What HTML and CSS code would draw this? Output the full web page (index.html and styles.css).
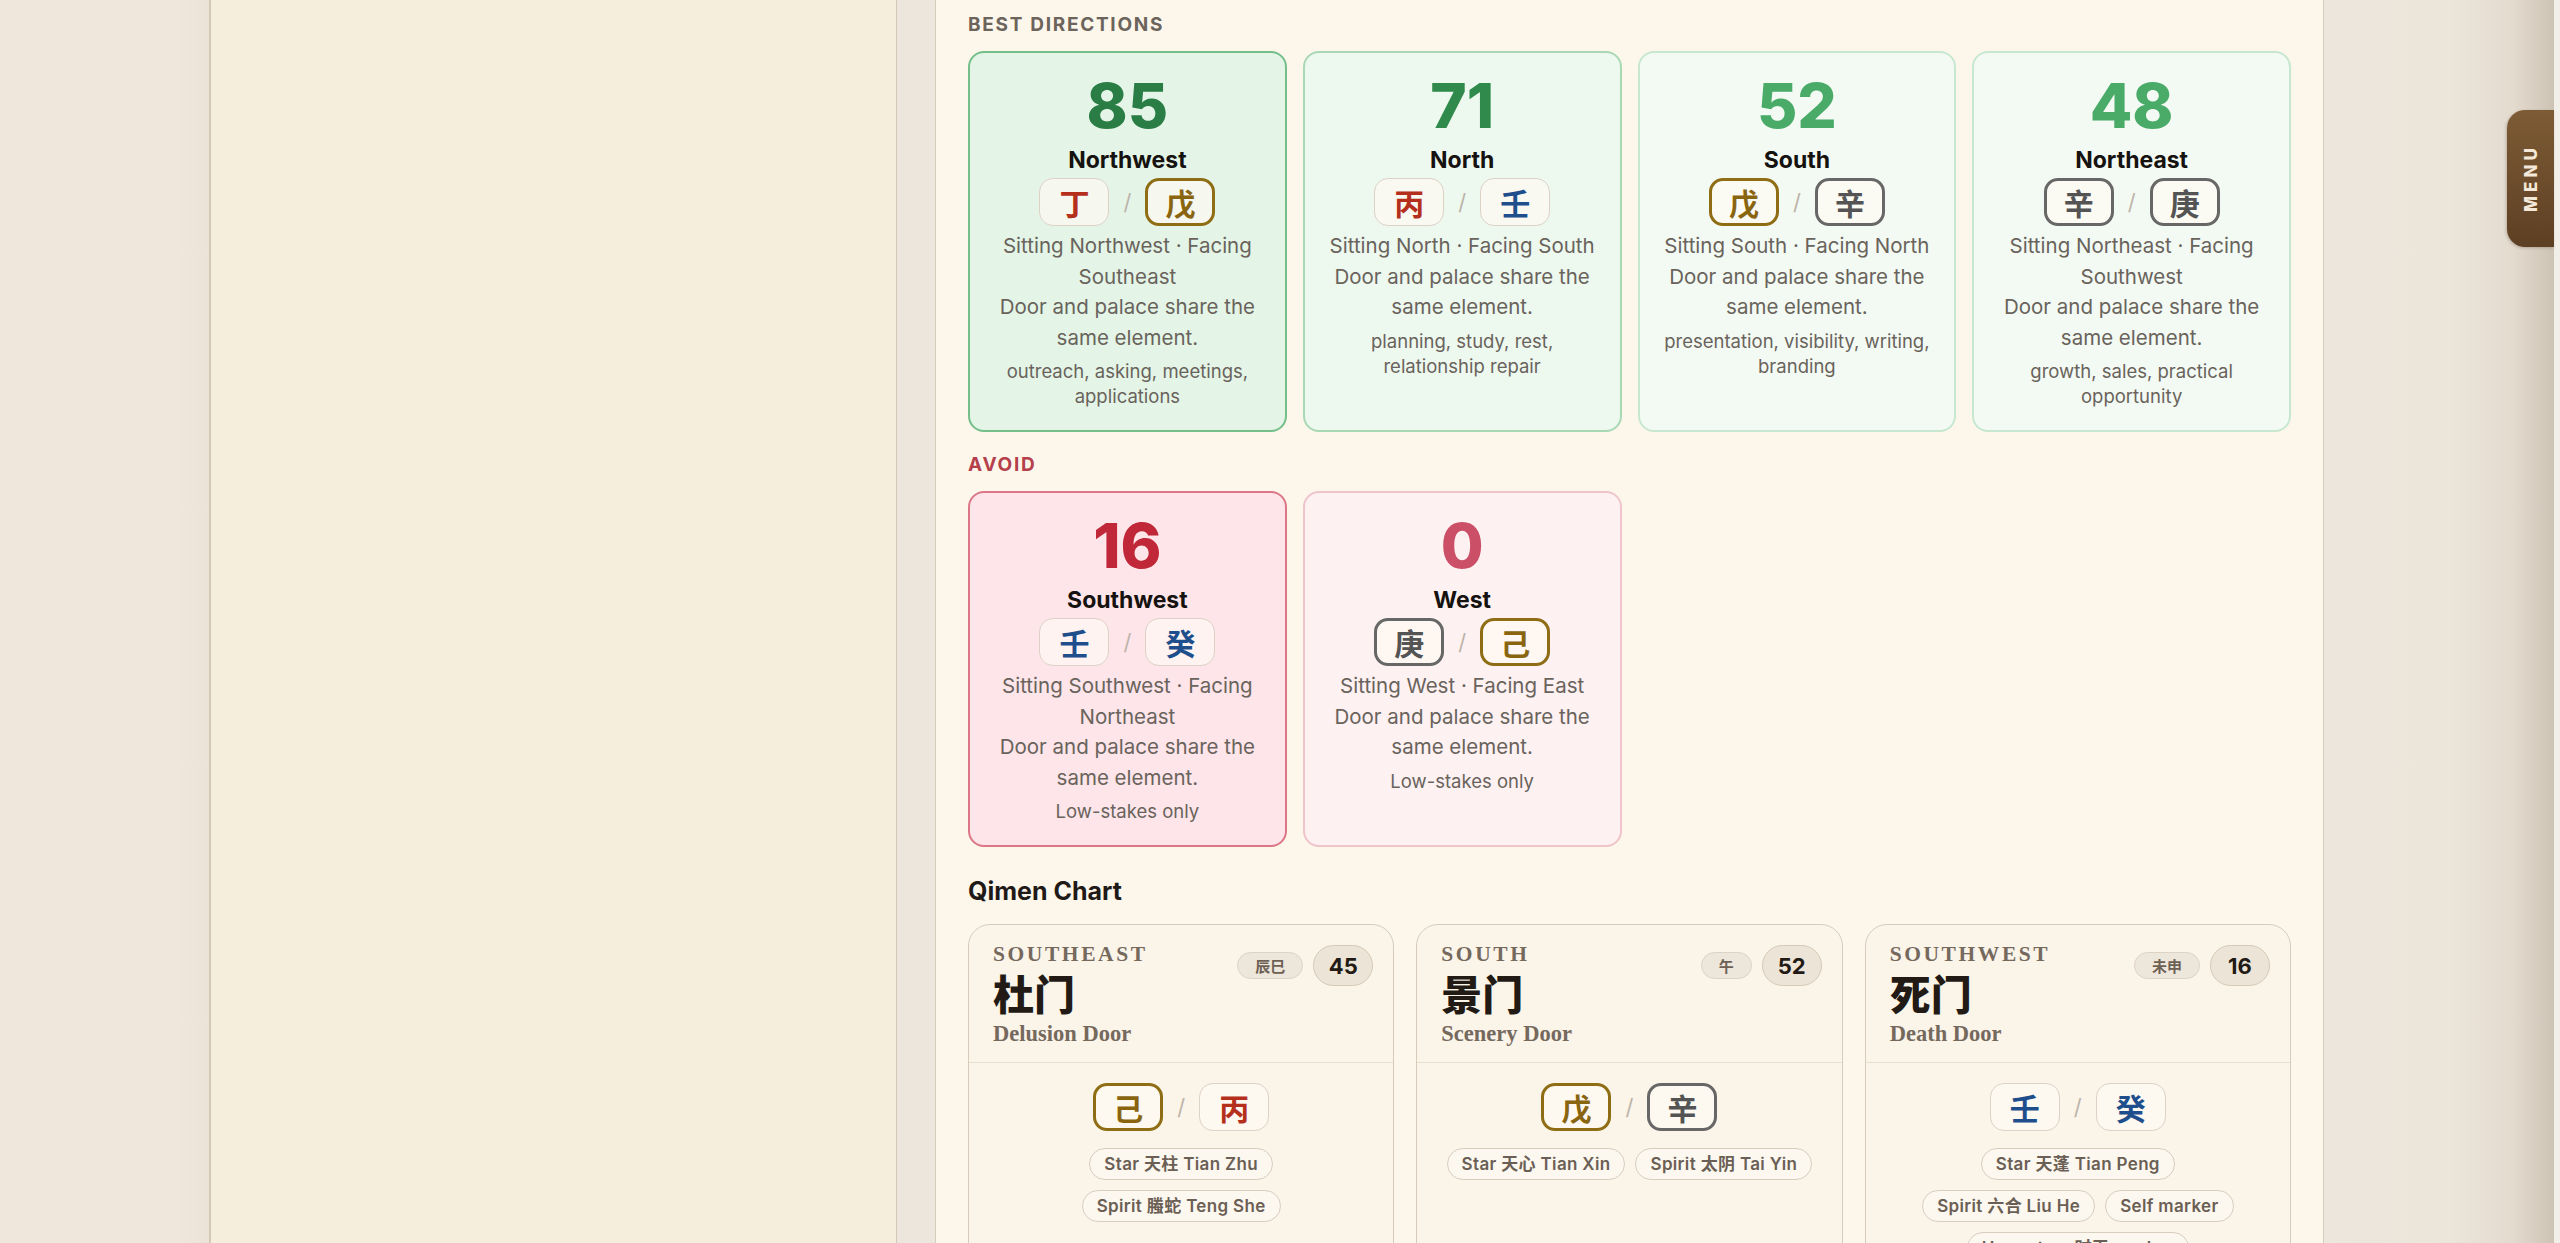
FILE: index.html
```html
<!DOCTYPE html>
<html lang="en">
<head>
    <meta charset="UTF-8">
    <meta name="viewport" content="width=device-width, initial-scale=1.0">
    <title>Qimen Directions</title>

    <link rel="stylesheet" href="styles.css">

</head>
<body>

    <div class="shell">
        <div class="gutter"></div>
        <aside class="side"></aside>
        <div class="gap"></div>

        <main class="main">
            <h4 class="label">Best Directions</h4>
            <div class="dir-grid">
                <div class="dir best-1">
                    <div class="score">85</div>
                    <div class="dir-name">Northwest</div>
                    <div class="stems"><span class="stem fire">丁</span><span class="slash">/</span><span class="stem earth">戊</span></div>
                    <p class="dir-text">Sitting Northwest · Facing Southeast</p>
                    <p class="dir-text">Door and palace share the same element.</p>
                    <p class="dir-use">outreach, asking, meetings, applications</p>
                </div>
                <div class="dir best-2">
                    <div class="score">71</div>
                    <div class="dir-name">North</div>
                    <div class="stems"><span class="stem fire">丙</span><span class="slash">/</span><span class="stem water">壬</span></div>
                    <p class="dir-text">Sitting North · Facing South</p>
                    <p class="dir-text">Door and palace share the same element.</p>
                    <p class="dir-use">planning, study, rest, relationship repair</p>
                </div>
                <div class="dir best-3">
                    <div class="score">52</div>
                    <div class="dir-name">South</div>
                    <div class="stems"><span class="stem earth">戊</span><span class="slash">/</span><span class="stem metal">辛</span></div>
                    <p class="dir-text">Sitting South · Facing North</p>
                    <p class="dir-text">Door and palace share the same element.</p>
                    <p class="dir-use">presentation, visibility, writing, branding</p>
                </div>
                <div class="dir best-3">
                    <div class="score">48</div>
                    <div class="dir-name">Northeast</div>
                    <div class="stems"><span class="stem metal">辛</span><span class="slash">/</span><span class="stem metal">庚</span></div>
                    <p class="dir-text">Sitting Northeast · Facing Southwest</p>
                    <p class="dir-text">Door and palace share the same element.</p>
                    <p class="dir-use">growth, sales, practical opportunity</p>
                </div>
            </div>

            <h4 class="label avoid">Avoid</h4>
            <div class="dir-grid">
                <div class="dir avoid-1">
                    <div class="score">16</div>
                    <div class="dir-name">Southwest</div>
                    <div class="stems"><span class="stem water">壬</span><span class="slash">/</span><span class="stem water">癸</span></div>
                    <p class="dir-text">Sitting Southwest · Facing Northeast</p>
                    <p class="dir-text">Door and palace share the same element.</p>
                    <p class="dir-use">Low-stakes only</p>
                </div>
                <div class="dir avoid-2">
                    <div class="score">0</div>
                    <div class="dir-name">West</div>
                    <div class="stems"><span class="stem metal">庚</span><span class="slash">/</span><span class="stem earth">己</span></div>
                    <p class="dir-text">Sitting West · Facing East</p>
                    <p class="dir-text">Door and palace share the same element.</p>
                    <p class="dir-use">Low-stakes only</p>
                </div>
            </div>

            <h3 class="chart-title">Qimen Chart</h3>
            <div class="chart-grid">
                <div class="palace">
                    <div class="palace-head">
                        <div>
                            <div class="palace-dir">Southeast</div>
                            <div class="palace-door">杜门</div>
                            <div class="palace-en">Delusion Door</div>
                        </div>
                        <div class="badges">
                            <span class="branch">辰巳</span>
                            <span class="pscore">45</span>
                        </div>
                    </div>
                    <div class="palace-body">
                        <div class="stems"><span class="stem earth">己</span><span class="slash">/</span><span class="stem fire">丙</span></div>
                        <div class="tags">
                            <span class="tag">Star 天柱 Tian Zhu</span>
                            <span class="tag">Spirit 螣蛇 Teng She</span>
                        </div>
                    </div>
                </div>
                <div class="palace">
                    <div class="palace-head">
                        <div>
                            <div class="palace-dir">South</div>
                            <div class="palace-door">景门</div>
                            <div class="palace-en">Scenery Door</div>
                        </div>
                        <div class="badges">
                            <span class="branch">午</span>
                            <span class="pscore">52</span>
                        </div>
                    </div>
                    <div class="palace-body">
                        <div class="stems"><span class="stem earth">戊</span><span class="slash">/</span><span class="stem metal">辛</span></div>
                        <div class="tags">
                            <span class="tag">Star 天心 Tian Xin</span>
                            <span class="tag">Spirit 太阴 Tai Yin</span>
                        </div>
                    </div>
                </div>
                <div class="palace">
                    <div class="palace-head">
                        <div>
                            <div class="palace-dir">Southwest</div>
                            <div class="palace-door">死门</div>
                            <div class="palace-en">Death Door</div>
                        </div>
                        <div class="badges">
                            <span class="branch">未申</span>
                            <span class="pscore">16</span>
                        </div>
                    </div>
                    <div class="palace-body">
                        <div class="stems"><span class="stem water">壬</span><span class="slash">/</span><span class="stem water">癸</span></div>
                        <div class="tags">
                            <span class="tag">Star 天蓬 Tian Peng</span>
                            <span class="tag">Spirit 六合 Liu He</span>
                            <span class="tag">Self marker</span>
                            <span class="tag">Hour stem 时干 marker</span>
                        </div>
                    </div>
                </div>
            </div>
        </main>

        <div class="drawer">
            <div class="menu-tab"><span>MENU</span></div>
        </div>
    </div>

</body>
</html>
```

FILE: styles.css
```css
body {
    margin: 0;
    height: 100vh;
    overflow: hidden;
    font-family: Inter, "Noto Sans CJK SC", sans-serif;
    background-color: #ede6dc;
    color: #1c1714;
}

.shell {
    display: grid;
    grid-template-columns: 209px 688px 38px 1389px 1fr;
    height: 100vh;
}

.gutter {
    background: linear-gradient(to right, #efe7dc 0, #efe7dc 85%, #ebe3d7 100%);
}

.side {
    background-color: #f6eedc;
    border-left: 2px solid #d5cab8;
    border-right: 1px solid #d3c8b7;
}

.gap {
    background-color: #ede6dd;
}

.main {
    background-color: #fcf6eb;
    border-left: 1px solid #d6ccbc;
    border-right: 1px solid #d6ccbc;
    padding: 13px 32px 0;
    overflow: hidden;
}

.drawer {
    position: relative;
    background: linear-gradient(to right, #ede6dc 0, #ece5da 55%, #e4dbcf 82%, #cdc3b5 100%);
    border-right: 6px solid #f2eee8;
}

.menu-tab {
    position: absolute;
    top: 110px;
    right: 0;
    width: 47px;
    height: 137px;
    border-radius: 18px 0 0 18px;
    background: linear-gradient(180deg, #7d5b35, #5d3f23);
    box-shadow: -1px 1px 3px rgba(60, 40, 20, 0.25);
    display: flex;
    align-items: center;
    justify-content: center;
}

.menu-tab span {
    writing-mode: vertical-rl;
    transform: rotate(180deg);
    color: #f4e8d8;
    font-weight: 800;
    font-size: 17px;
    letter-spacing: 0.24em;
}

/* direction cards */

.label {
    margin: 0 0 14px;
    font-size: 19px;
    line-height: 24px;
    font-weight: 700;
    letter-spacing: 0.09em;
    text-transform: uppercase;
    color: #6c645a;
}

.label.avoid {
    margin-top: 21px;
    color: #b5404c;
}

.dir-grid {
    display: grid;
    grid-template-columns: repeat(4, 1fr);
    gap: 16px;
}

.dir {
    border: 2px solid #c6e6ce;
    border-radius: 16px;
    background: #f3faf3;
    padding: 19px 20px 21px;
    text-align: center;
}

.best-1 { background: #e4f5e7; border-color: #74bf89; }
.best-2 { background: #edf8ef; border-color: #a8d8b4; }
.best-3 { background: #f3faf3; border-color: #c8e7d0; }
.avoid-1 { background: #fde5e9; border-color: #dc7787; }
.avoid-2 { background: #fdf1f2; border-color: #efc4cb; }

.score {
    font-size: 62px;
    line-height: 68px;
    font-weight: 800;
    color: #4aab69;
    margin-bottom: 7px;
}

.best-1 .score { color: #2a7d45; }
.best-2 .score { color: #2f8a4c; }
.avoid-1 .score { color: #c0283a; }
.avoid-2 .score { color: #cb4f67; }

.dir-name {
    font-size: 23px;
    line-height: 26px;
    font-weight: 700;
    color: #15120f;
}

.stems {
    display: flex;
    justify-content: center;
    align-items: center;
    gap: 14px;
    margin: 5px 0;
}

.stem {
    width: 70px;
    height: 48px;
    box-sizing: border-box;
    display: flex;
    align-items: center;
    justify-content: center;
    border: 1.5px solid #dcd2c6;
    border-radius: 14px;
    background: rgba(253, 249, 242, 0.7);
    font-family: "Noto Sans CJK SC", sans-serif;
    font-size: 30px;
    font-weight: 700;
}

.stem.fire { color: #b5301c; }
.stem.water { color: #1f4e8c; }
.stem.earth { color: #8a6510; border: 3px solid #8f6d14; }
.stem.metal { color: #545454; border: 3px solid #676767; }

.slash {
    font-size: 22px;
    color: #bdb4a9;
    width: 8px;
    text-align: center;
}

.dir-text {
    margin: 0;
    font-size: 20.5px;
    line-height: 30.5px;
    color: #69635c;
}

.dir-use {
    margin: 6px 0 0;
    font-size: 18.5px;
    line-height: 25px;
    color: #69635c;
}

/* chart */

.chart-title {
    margin: 29px 0 18px;
    font-size: 25px;
    line-height: 30px;
    font-weight: 700;
    color: #1f1a17;
}

.chart-grid {
    display: grid;
    grid-template-columns: repeat(3, 1fr);
    gap: 22px;
    align-items: start;
}

.palace {
    border: 1.5px solid #d7ccbc;
    border-radius: 22px;
    background: #fbf4e9;
    min-height: 420px;
}

.palace-head {
    display: flex;
    justify-content: space-between;
    align-items: flex-start;
    padding: 17px 20px 16px 24px;
    border-bottom: 1px solid #e8dfd2;
}

.palace-dir {
    font-family: "Liberation Serif", serif;
    font-weight: 700;
    font-size: 21.5px;
    line-height: 25px;
    letter-spacing: 0.12em;
    text-transform: uppercase;
    color: #75695d;
}

.palace-door {
    margin-top: 2px;
    font-family: "Noto Sans CJK SC", serif;
    font-weight: 900;
    font-size: 41px;
    line-height: 46px;
    color: #221a14;
}

.palace-en {
    margin-top: 6px;
    font-family: "Liberation Serif", serif;
    font-weight: 700;
    font-size: 22.5px;
    line-height: 25px;
    color: #75695d;
}

.badges {
    display: flex;
    align-items: center;
    gap: 10px;
    margin-top: 3px;
}

.branch {
    height: 27px;
    box-sizing: border-box;
    padding: 0 17px;
    display: flex;
    align-items: center;
    border: 1.5px solid #ddd3c4;
    border-radius: 999px;
    background: #ede6da;
    font-size: 15px;
    font-weight: 700;
    color: #6d6156;
}

.pscore {
    width: 60px;
    height: 41px;
    box-sizing: border-box;
    display: flex;
    align-items: center;
    justify-content: center;
    border: 1.5px solid #d5cab9;
    border-radius: 999px;
    background: #ece4d7;
    font-size: 22px;
    font-weight: 700;
    color: #221a14;
}

.palace-body {
    padding: 20px 24px;
}

.palace-body .stems {
    margin: 0;
}

.palace-body .stem {
    background: #fdf8f0;
}

.tags {
    display: flex;
    flex-wrap: wrap;
    justify-content: center;
    gap: 10px;
    margin-top: 17px;
}

.tag {
    padding: 5px 14px;
    line-height: 20px;
    border: 1.5px solid #d8cebf;
    border-radius: 999px;
    background: #fcf7ef;
    font-size: 17px;
    font-weight: 600;
    letter-spacing: 0.02em;
    color: #6b5f55;
}
```
